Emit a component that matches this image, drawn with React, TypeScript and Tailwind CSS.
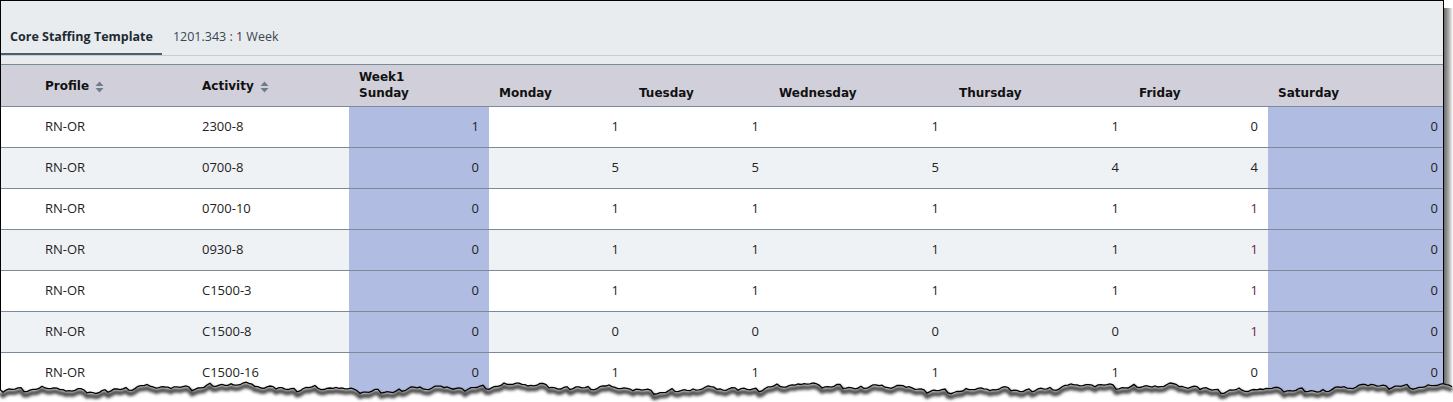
import React from "react";

type Row = { profile: string; activity: string; vals: number[]; purple?: boolean };

const rows: Row[] = [
  { profile: "RN-OR", activity: "2300-8", vals: [1, 1, 1, 1, 1, 0, 0] },
  { profile: "RN-OR", activity: "0700-8", vals: [0, 5, 5, 5, 4, 4, 0] },
  { profile: "RN-OR", activity: "0700-10", vals: [0, 1, 1, 1, 1, 1, 0], purple: true },
  { profile: "RN-OR", activity: "0930-8", vals: [0, 1, 1, 1, 1, 1, 0], purple: true },
  { profile: "RN-OR", activity: "C1500-3", vals: [0, 1, 1, 1, 1, 1, 0], purple: true },
  { profile: "RN-OR", activity: "C1500-8", vals: [0, 0, 0, 0, 0, 1, 0], purple: true },
  { profile: "RN-OR", activity: "C1500-16", vals: [0, 1, 1, 1, 1, 0, 0] },
];

const GRID =
  "grid grid-cols-[191px_157px_140px_140px_140px_180px_180px_139px_180px] w-[1447px]";

function SortIcon() {
  return (
    <svg width="9" height="12" viewBox="0 0 9 12" className="ml-[6px] mt-[3px]">
      <polygon points="0.5,5 4.5,0.5 8.5,5" fill="#6d7d8a" />
      <polygon points="0.5,7 4.5,11.5 8.5,7" fill="#6d7d8a" />
    </svg>
  );
}

function tornPath(offset: number) {
  const pts: string[] = [];
  const base = 388;
  for (let x = 0; x <= 1453; x += 3) {
    const n =
      2.4 * Math.sin(x * 0.021) +
      1.6 * Math.sin(x * 0.067 + 1.3) +
      1.1 * Math.sin(x * 0.19 + 2.1) +
      0.8 * Math.sin(x * 0.53 + 0.4) +
      (((x * 7919) % 7) - 3) * 0.4;
    pts.push(`${x},${(base + n + offset).toFixed(1)}`);
  }
  return pts;
}

export default function App() {
  const line = tornPath(0);
  const fillD = `M0,402 L${line.join(" L")} L1453,402 Z`;
  const strokeD = `M${line.join(" L")}`;
  const shadowD = `M${tornPath(3.5).join(" L")}`;

  return (
    <div className="relative w-[1453px] h-[402px] bg-white overflow-hidden">
      {/* right drop shadow */}
      <div className="absolute left-[1444px] top-[8px] w-[9px] h-[394px] bg-gradient-to-r from-[#6a6a6a] via-[#a8a8a8] to-white" />
      {/* framed screenshot */}
      <div
        className="relative w-[1444px] h-[402px] border-l border-t border-r border-black overflow-hidden bg-white"
        style={{ fontFamily: '"Open Sans", "Noto Sans", sans-serif' }}
      >
        {/* top tab bar */}
        <div className="bg-[#e8ecef]">
          <div className="flex items-end h-[55px] border-b border-[#c9ced3]">
            <div className="px-[9px] pb-[8px] border-b-2 border-[#4b5e6e] text-[12.5px] leading-4 font-bold text-[#1e2a33]">
              Core Staffing Template
            </div>
            <div className="ml-[11px] pb-[10px] text-[12.5px] leading-4 text-[#3a4650]">
              1201.343 : <span className="text-[#4a2a55]">1</span> Week
            </div>
          </div>
          <div className="h-[8px]" />
        </div>

        {/* table header */}
        <div
          className={`${GRID} h-[43px] bg-[#d1d0da] border-t border-b border-[#7a8b9a] text-[12px] text-[#111] font-bold`}
          style={{ fontFamily: '"DejaVu Sans", Verdana, sans-serif' }}
        >
          <div className="flex items-center pl-[44px]">
            Profile
            <SortIcon />
          </div>
          <div className="flex items-center pl-[10px]">
            Activity
            <SortIcon />
          </div>
          <div className="flex flex-col justify-end pl-[10px] pb-[5px] leading-4">
            <span>Week1</span>
            <span>Sunday</span>
          </div>
          {["Monday", "Tuesday", "Wednesday", "Thursday", "Friday", "Saturday"].map((d) => (
            <div key={d} className="flex items-end pl-[10px] pb-[5px] leading-4">
              {d}
            </div>
          ))}
        </div>

        {/* rows */}
        {rows.map((r, i) => {
          const alt = i % 2 === 1;
          const bg = alt ? "bg-[#eff2f5]" : "bg-white";
          return (
            <div
              key={i}
              className={`${GRID} h-[41px] border-b border-[#7b8b97] text-[13px] text-[#222]`}
            >
              <div className={`${bg} flex items-center pl-[44px]`}>{r.profile}</div>
              <div className={`${bg} flex items-center pl-[10px]`}>{r.activity}</div>
              {r.vals.map((v, j) => {
                const hl = j === 0 || j === 6;
                const purple = r.purple && j === 5;
                return (
                  <div
                    key={j}
                    className={`${hl ? "bg-[#b0bce2]" : bg} flex items-center justify-end pr-[10px] ${
                      purple ? "text-[#6b1d4e]" : ""
                    }`}
                  >
                    {v}
                  </div>
                );
              })}
            </div>
          );
        })}
      </div>

      {/* torn bottom edge */}
      <svg
        className="absolute left-0 top-0 pointer-events-none"
        width="1453"
        height="402"
        viewBox="0 0 1453 402"
      >
        <defs>
          <filter id="blur" x="-5%" y="-50%" width="110%" height="200%">
            <feGaussianBlur stdDeviation="1.6" />
          </filter>
        </defs>
        <path d={fillD} fill="#ffffff" />
        <path d={shadowD} fill="none" stroke="#4a4a4a" strokeWidth="4.5" filter="url(#blur)" />
        <path d={strokeD} fill="none" stroke="#000" strokeWidth="1.3" />
      </svg>
    </div>
  );
}
